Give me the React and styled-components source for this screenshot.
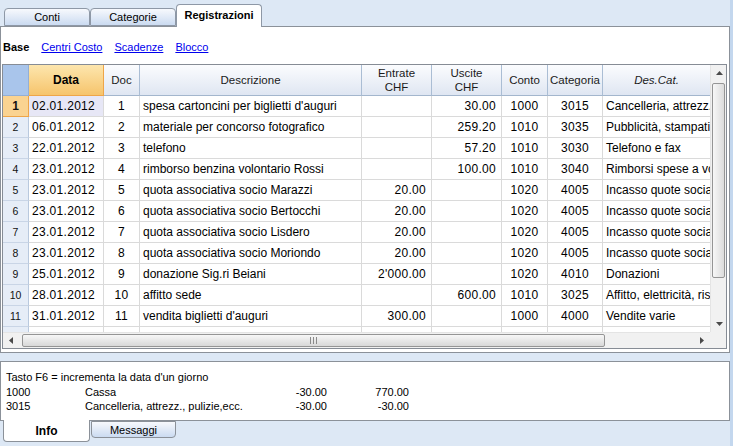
import React from 'react';
import styled, { createGlobalStyle, css } from 'styled-components';

const Global = createGlobalStyle`
  html, body { margin: 0; padding: 0; background: #dde8f5; }
  * { box-sizing: border-box; }
  body { font-family: "Liberation Sans", Arial, sans-serif; }
`;

const Screen = styled.div`
  width: 733px;
  height: 446px;
  background: #dde8f5;
  border-right: 3px solid #c3d7ee;
  display: flex;
  flex-direction: column;
  overflow: hidden;
  font-family: "Liberation Sans", Arial, sans-serif;
  color: #000;
`;

const TopTabs = styled.div`
  height: 26px;
  display: flex;
  align-items: flex-end;
  padding-left: 4px;
  position: relative;
  z-index: 2;
`;

const TopTab = styled.div`
  width: 86px;
  height: ${p => (p.$active ? '23px' : '18px')};
  margin-bottom: ${p => (p.$active ? '-1px' : '0')};
  border: 1px solid #8e98a6;
  border-bottom: ${p => (p.$active ? 'none' : '1px solid #8e98a6')};
  border-radius: 4px 4px 0 0;
  background: ${p => (p.$active ? '#ffffff' : 'linear-gradient(#f7f9fd, #cbdbf1)')};
  font-size: 11px;
  font-weight: ${p => (p.$active ? 700 : 400)};
  display: flex;
  align-items: center;
  justify-content: center;
  padding-bottom: ${p => (p.$active ? '2px' : '0')};
  color: #000;
`;

const MainPanel = styled.div`
  width: 730px;
  height: 327px;
  background: #fff;
  border: 1px solid #8b9199;
  padding: 0 2px 3px 1px;
  display: flex;
  flex-direction: column;
`;

const SubNav = styled.div`
  height: 37px;
  display: flex;
  align-items: center;
  gap: 12px;
  padding: 3px 0 0 1px;
  font-size: 11px;
`;

const NavCurrent = styled.span`
  font-weight: 700;
`;

const NavLink = styled.a`
  color: #0000ee;
  text-decoration: underline;
  cursor: pointer;
`;

const GridFrame = styled.div`
  width: 725px;
  height: 285px;
  border: 1px solid #868c95;
  display: flex;
  flex-direction: column;
`;

const GridBody = styled.div`
  height: 267px;
  display: flex;
`;

const Table = styled.div`
  width: 707px;
  display: flex;
  flex-direction: column;
  overflow: hidden;
`;

const HeaderRow = styled.div`
  display: flex;
  height: 31px;
  flex: 0 0 31px;
`;

const HeadCell = styled.div`
  flex: 0 0 ${p => p.$w}px;
  width: ${p => p.$w}px;
  height: 31px;
  display: flex;
  align-items: center;
  justify-content: center;
  text-align: center;
  font-size: 11.5px;
  line-height: 14px;
  color: #1b1b1b;
  white-space: pre-line;
  border-right: ${p => (p.$last ? 'none' : '1px solid #aabdd4')};
  border-bottom: 1px solid #a3b6cd;
  background: linear-gradient(#fbfcfe, #dfe6f2);
  ${p => p.$italic && css`font-style: italic;`}
  ${p => p.$kind === 'corner' && css`
    background: #a9c5eb;
    border-right: 1px solid #93afd6;
    border-bottom: 1px solid #93afd6;
  `}
  ${p => p.$kind === 'sorted' && css`
    background: linear-gradient(#fde6ae, #f6c46c);
    border-right: 1px solid #eea548;
    border-bottom: 1px solid #eea548;
    font-weight: 700;
    font-size: 12px;
    color: #000;
  `}
`;

const Rows = styled.div`
  flex: 1;
  overflow: hidden;
`;

const Row = styled.div`
  display: flex;
  height: 21px;
`;

const Cell = styled.div`
  flex: 0 0 ${p => p.$w}px;
  width: ${p => p.$w}px;
  height: 21px;
  line-height: 20px;
  font-size: 12px;
  white-space: nowrap;
  overflow: hidden;
  text-align: ${p => p.$align};
  padding: ${p => (p.$align === 'right' ? '0 5px 0 0' : p.$align === 'left' ? '0 0 0 3px' : '0')};
  letter-spacing: ${p => (p.$num ? '0.3px' : '0')};
  border-right: ${p => (p.$last ? 'none' : '1px solid #dadada')};
  border-bottom: 1px solid #dadada;
  background: ${p => (p.$selected ? '#e7e7f6' : '#fff')};
`;

const NumCell = styled.div`
  flex: 0 0 26px;
  width: 26px;
  height: 21px;
  line-height: 20px;
  text-align: center;
  font-size: ${p => (p.$current ? '12px' : '10.5px')};
  font-weight: ${p => (p.$current ? 700 : 400)};
  background: ${p => (p.$current ? '#fad391' : '#e6edf7')};
  border-right: 1px solid ${p => (p.$current ? '#eea548' : '#b9c9de')};
  border-bottom: 1px solid ${p => (p.$current ? '#eea548' : '#c9d5e6')};
  color: #111;
`;

const VScroll = styled.div`
  width: 16px;
  display: flex;
  flex-direction: column;
  background: #f1f1f1;
  border-left: 1px solid #e4e4e4;
`;

const ArrowBtn = styled.div`
  flex: 0 0 16px;
  height: 16px;
  width: 16px;
  display: flex;
  align-items: center;
  justify-content: center;
`;

const VThumb = styled.div`
  height: 195px;
  margin: 2px 1px 0 1px;
  border: 1px solid #959595;
  border-radius: 2px;
  background: linear-gradient(90deg, #f7f7f7, #dcdcdc);
`;

const Spacer = styled.div`
  flex: 1;
`;

const HScrollRow = styled.div`
  height: 16px;
  display: flex;
`;

const HScroll = styled.div`
  width: 707px;
  display: flex;
  align-items: center;
  background: #f1f1f1;
  border-top: 1px solid #e4e4e4;
`;

const HThumb = styled.div`
  width: 583px;
  height: 13px;
  margin-left: 3px;
  border: 1px solid #959595;
  border-radius: 2px;
  background: linear-gradient(#f7f7f7, #d8d8d8);
  display: flex;
  align-items: center;
  justify-content: center;
`;

const Corner = styled.div`
  width: 16px;
  background: #f1f1f1;
`;

const InfoBox = styled.div`
  margin-top: 8px;
  width: 730px;
  height: 60px;
  background: #fff;
  border: 1px solid #8b9199;
  padding: 8px 0 0 5px;
  font-size: 11px;
  line-height: 14.5px;
`;

const InfoGrid = styled.div`
  display: grid;
  grid-template-columns: 79px 180px 62px 82px;
`;

const InfoLine = styled.div`
  grid-column: 1 / -1;
`;

const Amount = styled.span`
  text-align: right;
`;

const BottomTabs = styled.div`
  display: flex;
  align-items: flex-start;
  padding-left: 3px;
  gap: 1px;
  margin-top: -1px;
`;

const BottomTab = styled.div`
  width: ${p => (p.$active ? '87px' : '85px')};
  height: ${p => (p.$active ? '22px' : '17px')};
  margin-top: ${p => (p.$active ? '0' : '1px')};
  border: 1px solid #8b9199;
  border-top: ${p => (p.$active ? 'none' : '1px solid #8b9199')};
  border-radius: 0 0 4px 4px;
  background: ${p => (p.$active ? '#fff' : 'linear-gradient(#f7f9fd, #cbdbf1)')};
  font-size: ${p => (p.$active ? '12px' : '11px')};
  font-weight: ${p => (p.$active ? 700 : 400)};
  display: flex;
  align-items: center;
  justify-content: center;
  padding-top: ${p => (p.$active ? '1px' : '0')};
`;

const Tri = ({ dir }) => {
  const pts = {
    up: '0,4 3.5,0 7,4',
    down: '0,0 7,0 3.5,4',
    left: '4,0 4,7 0,3.5',
    right: '0,0 0,7 4,3.5',
  }[dir];
  const vertical = dir === 'up' || dir === 'down';
  return (
    <svg width={vertical ? 7 : 4} height={vertical ? 4 : 7} viewBox={vertical ? '0 0 7 4' : '0 0 4 7'}>
      <polygon points={pts} fill="#4a4a4a" />
    </svg>
  );
};

const Grip = () => (
  <svg width="8" height="7" viewBox="0 0 8 7">
    <rect x="0" y="0" width="1" height="7" fill="#8a8a8a" />
    <rect x="3" y="0" width="1" height="7" fill="#8a8a8a" />
    <rect x="6" y="0" width="1" height="7" fill="#8a8a8a" />
  </svg>
);

const columns = [
  { key: 'data', w: 75, align: 'left', num: true, label: 'Data', kind: 'sorted' },
  { key: 'doc', w: 36, align: 'center', num: true, label: 'Doc' },
  { key: 'desc', w: 222, align: 'left', label: 'Descrizione' },
  { key: 'ent', w: 70, align: 'right', num: true, label: 'Entrate\nCHF' },
  { key: 'usc', w: 70, align: 'right', num: true, label: 'Uscite\nCHF' },
  { key: 'conto', w: 46, align: 'center', num: true, label: 'Conto' },
  { key: 'cat', w: 55, align: 'center', num: true, label: 'Categoria' },
  { key: 'dcat', w: 107, align: 'left', label: 'Des.Cat.', italic: true, last: true },
];

const rows = [
  ['02.01.2012', '1', "spesa cartoncini per biglietti d'auguri", '', '30.00', '1000', '3015', 'Cancelleria, attrezz., pulizie,ecc.'],
  ['06.01.2012', '2', 'materiale per concorso fotografico', '', '259.20', '1010', '3035', 'Pubblicità, stampati'],
  ['22.01.2012', '3', 'telefono', '', '57.20', '1010', '3030', 'Telefono e fax'],
  ['23.01.2012', '4', 'rimborso benzina volontario Rossi', '', '100.00', '1010', '3040', 'Rimborsi spese a volontari'],
  ['23.01.2012', '5', 'quota associativa socio Marazzi', '20.00', '', '1020', '4005', 'Incasso quote sociali'],
  ['23.01.2012', '6', 'quota associativa socio Bertocchi', '20.00', '', '1020', '4005', 'Incasso quote sociali'],
  ['23.01.2012', '7', 'quota associativa socio Lisdero', '20.00', '', '1020', '4005', 'Incasso quote sociali'],
  ['23.01.2012', '8', 'quota associativa socio Moriondo', '20.00', '', '1020', '4005', 'Incasso quote sociali'],
  ['25.01.2012', '9', 'donazione Sig.ri Beiani', "2'000.00", '', '1020', '4010', 'Donazioni'],
  ['28.01.2012', '10', 'affitto sede', '', '600.00', '1010', '3025', 'Affitto, elettricità, riscaldamento'],
  ['31.01.2012', '11', "vendita biglietti d'auguri", '300.00', '', '1000', '4000', 'Vendite varie'],
  ['', '', '', '', '', '', '', ''],
];

export default function App() {
  return (
    <Screen>
      <Global />
      <TopTabs>
        <TopTab>Conti</TopTab>
        <TopTab>Categorie</TopTab>
        <TopTab $active>Registrazioni</TopTab>
      </TopTabs>
      <MainPanel>
        <SubNav>
          <NavCurrent>Base</NavCurrent>
          <NavLink>Centri Costo</NavLink>
          <NavLink>Scadenze</NavLink>
          <NavLink>Blocco</NavLink>
        </SubNav>
        <GridFrame>
          <GridBody>
            <Table>
              <HeaderRow>
                <HeadCell $w={26} $kind="corner" />
                {columns.map(c => (
                  <HeadCell key={c.key} $w={c.w} $kind={c.kind} $italic={c.italic} $last={c.last}>
                    {c.label}
                  </HeadCell>
                ))}
              </HeaderRow>
              <Rows>
                {rows.map((r, i) => (
                  <Row key={i}>
                    <NumCell $current={i === 0}>{i + 1}</NumCell>
                    {columns.map((c, j) => (
                      <Cell
                        key={c.key}
                        $w={c.w}
                        $align={c.align}
                        $num={c.num}
                        $last={c.last}
                        $selected={i === 0 && j === 0}
                      >
                        {r[j]}
                      </Cell>
                    ))}
                  </Row>
                ))}
              </Rows>
            </Table>
            <VScroll>
              <ArrowBtn><Tri dir="up" /></ArrowBtn>
              <VThumb />
              <Spacer />
              <ArrowBtn><Tri dir="down" /></ArrowBtn>
            </VScroll>
          </GridBody>
          <HScrollRow>
            <HScroll>
              <ArrowBtn><Tri dir="left" /></ArrowBtn>
              <HThumb><Grip /></HThumb>
              <Spacer />
              <ArrowBtn><Tri dir="right" /></ArrowBtn>
            </HScroll>
            <Corner />
          </HScrollRow>
        </GridFrame>
      </MainPanel>
      <InfoBox>
        <InfoGrid>
          <InfoLine>Tasto F6 = incrementa la data d'un giorno</InfoLine>
          <span>1000</span>
          <span>Cassa</span>
          <Amount>-30.00</Amount>
          <Amount>770.00</Amount>
          <span>3015</span>
          <span>Cancelleria, attrezz., pulizie,ecc.</span>
          <Amount>-30.00</Amount>
          <Amount>-30.00</Amount>
        </InfoGrid>
      </InfoBox>
      <BottomTabs>
        <BottomTab $active>Info</BottomTab>
        <BottomTab>Messaggi</BottomTab>
      </BottomTabs>
    </Screen>
  );
}
